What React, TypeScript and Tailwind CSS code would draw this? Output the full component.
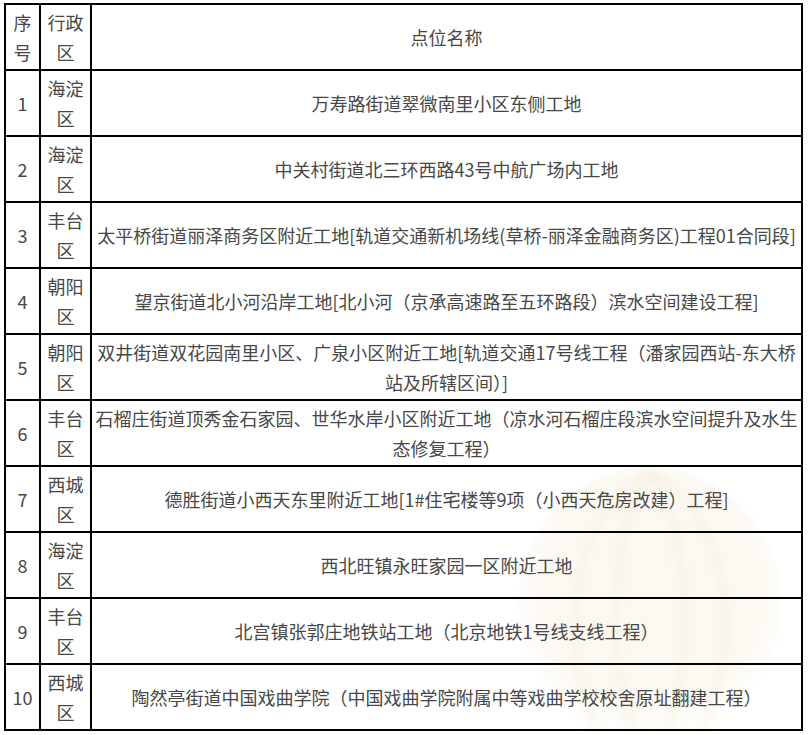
const rows: { no: string; district: string; name: React.ReactNode }[] = [
  { no: '1', district: '海淀', name: '万寿路街道翠微南里小区东侧工地' },
  { no: '2', district: '海淀', name: '中关村街道北三环西路43号中航广场内工地' },
  { no: '3', district: '丰台', name: '太平桥街道丽泽商务区附近工地[轨道交通新机场线(草桥-丽泽金融商务区)工程01合同段]' },
  { no: '4', district: '朝阳', name: '望京街道北小河沿岸工地[北小河（京承高速路至五环路段）滨水空间建设工程]' },
  {
    no: '5',
    district: '朝阳',
    name: (
      <>
        双井街道双花园南里小区、广泉小区附近工地[轨道交通17号线工程（潘家园西站-东大桥
        <br />
        站及所辖区间）]
      </>
    ),
  },
  {
    no: '6',
    district: '丰台',
    name: (
      <>
        石榴庄街道顶秀金石家园、世华水岸小区附近工地（凉水河石榴庄段滨水空间提升及水生
        <br />
        态修复工程）
      </>
    ),
  },
  { no: '7', district: '西城', name: '德胜街道小西天东里附近工地[1#住宅楼等9项（小西天危房改建）工程]' },
  { no: '8', district: '海淀', name: '西北旺镇永旺家园一区附近工地' },
  { no: '9', district: '丰台', name: '北宫镇张郭庄地铁站工地（北京地铁1号线支线工程）' },
  { no: '10', district: '西城', name: '陶然亭街道中国戏曲学院（中国戏曲学院附属中等戏曲学校校舍原址翻建工程）' },
]

// faint hot-air balloon watermark behind the table
function Balloon() {
  return (
    <svg
      className="pointer-events-none absolute left-[500px] top-[450px]"
      width="300"
      height="285"
      viewBox="0 0 300 285"
    >
      <defs>
        <radialGradient id="bg1" cx="50%" cy="45%" r="55%">
          <stop offset="0%" stopColor="#f8f0df" stopOpacity="0.45" />
          <stop offset="75%" stopColor="#f6ead4" stopOpacity="0.3" />
          <stop offset="100%" stopColor="#f6ead4" stopOpacity="0" />
        </radialGradient>
        <filter id="blur1">
          <feGaussianBlur stdDeviation="4" />
        </filter>
      </defs>
      <ellipse cx="150" cy="155" rx="132" ry="138" fill="url(#bg1)" />
      <g filter="url(#blur1)" fill="none" strokeWidth="8" strokeOpacity="0.18">
        <path d="M150 22 C110 70 105 220 135 285" stroke="#eadcc0" />
        <path d="M150 22 C190 70 195 220 165 285" stroke="#eadcc0" />
        <path d="M150 22 C70 60 55 200 100 285" stroke="#f0d9c8" />
        <path d="M150 22 C230 60 245 200 200 285" stroke="#eee0b8" />
      </g>
    </svg>
  )
}

export default function App() {
  const cell = 'border-2 border-black p-0 text-center align-middle'
  return (
    <div
      className="relative min-h-[735px] w-[809px] bg-white pl-[4px] pt-[3px] text-[18px] leading-[30px] text-[#474747]"
      style={{ fontFamily: '"Noto Sans CJK SC", "Noto Sans", sans-serif' }}
    >
      <Balloon />
      <table className="relative w-[799px] table-fixed border-collapse">
        <colgroup>
          <col className="w-[35px]" />
          <col className="w-[51px]" />
          <col />
        </colgroup>
        <tbody>
          <tr className="h-[66px]">
            <td className={cell}>
              序<br />号
            </td>
            <td className={cell}>
              行政<br />区
            </td>
            <td className={cell}>点位名称</td>
          </tr>
          {rows.map(r => (
            <tr key={r.no} className="h-[66px]">
              <td className={cell}>{r.no}</td>
              <td className={cell}>
                {r.district}
                <br />区
              </td>
              <td className={`${cell} whitespace-nowrap`}>{r.name}</td>
            </tr>
          ))}
        </tbody>
      </table>
    </div>
  )
}
